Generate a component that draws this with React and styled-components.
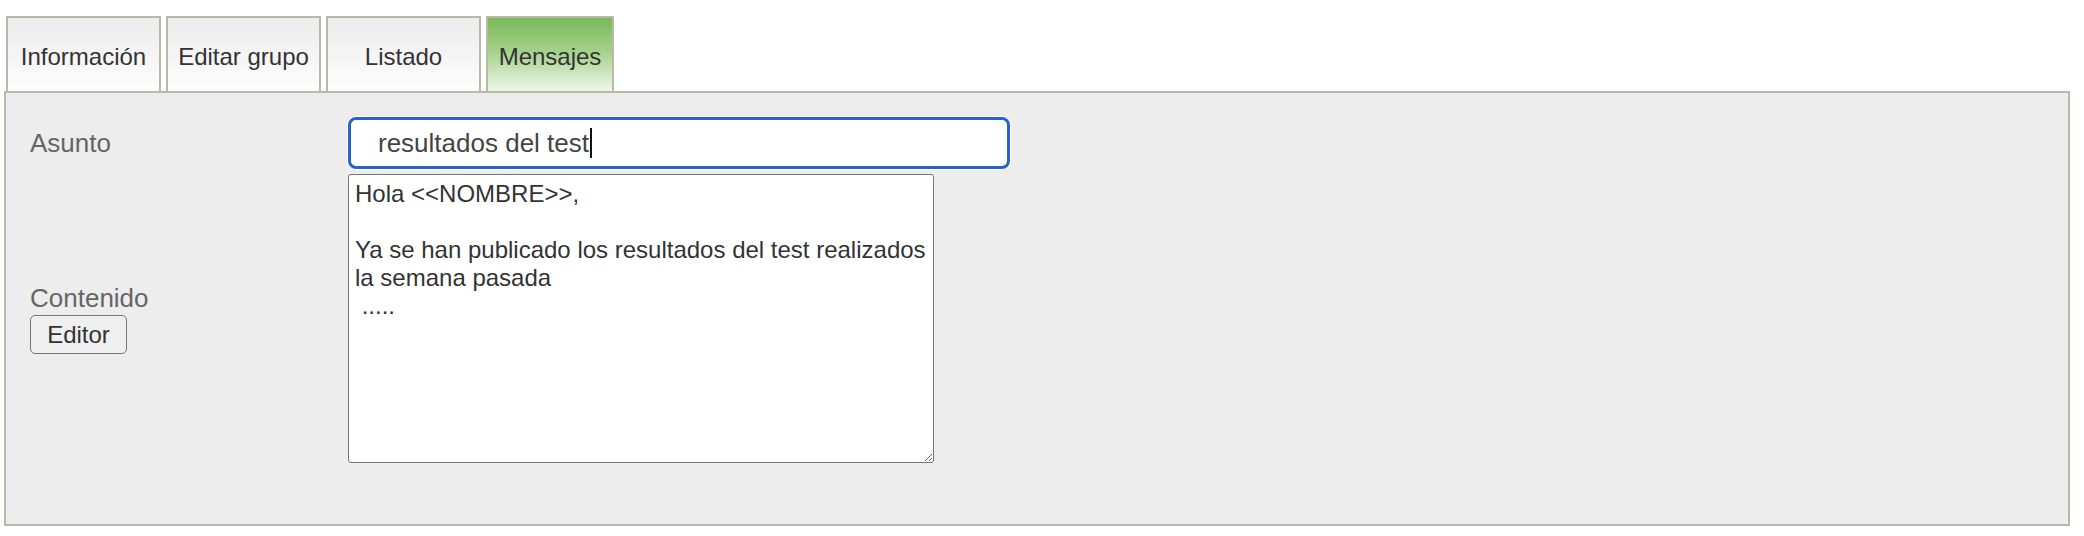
import React from "react";
import styled, { createGlobalStyle } from "styled-components";

const GlobalStyle = createGlobalStyle`
  body {
    margin: 0;
    background: #fff;
    font-family: "Liberation Sans", Arial, sans-serif;
  }
`;

const tabs = [
  { title: "Información", width: 155 },
  { title: "Editar grupo", width: 155 },
  { title: "Listado", width: 155 },
  { title: "Mensajes", width: 128, active: true },
];

const App = () => {
  return (
    <Page>
      <GlobalStyle />
      <TabBar>
        {tabs.map((tab) => (
          <Tab key={tab.title} width={tab.width} active={tab.active}>
            {tab.title}
          </Tab>
        ))}
      </TabBar>
      <Panel>
        <Form>
          <Label>Asunto</Label>
          <SubjectField role="textbox">
            resultados del test
            <Caret />
          </SubjectField>
          <LabelBlock>
            <Label>Contenido</Label>
            <EditorButton type="button">Editor</EditorButton>
          </LabelBlock>
          <Body
            defaultValue={"Hola <<NOMBRE>>,\n\nYa se han publicado los resultados del test realizados la semana pasada\n ....."}
          />
        </Form>
      </Panel>
    </Page>
  );
};

const Page = styled.div`
  padding: 16px 14px 10px 4px;
`;

const TabBar = styled.div`
  display: flex;
  gap: 5px;
  padding-left: 2px;
`;

const Tab = styled.div`
  box-sizing: border-box;
  width: ${({ width }) => width}px;
  height: 75px;
  padding: 4px 0 0;
  display: flex;
  align-items: center;
  justify-content: center;
  border: 2px solid #b9b8a9;
  border-bottom: none;
  font-size: 24px;
  color: #333;
  cursor: pointer;
  background: ${({ active }) =>
    active
      ? "linear-gradient(to bottom, #79b957 0%, #a3d18a 45%, #eef7e9 100%)"
      : "linear-gradient(to bottom, #ececec 0%, #fdfdfd 100%)"};
`;

const Panel = styled.div`
  box-sizing: border-box;
  height: 435px;
  border: 2px solid #b9b8a9;
  background: #ededed;
  padding: 24px 24px 0;
`;

const Form = styled.div`
  display: grid;
  grid-template-columns: 318px auto;
  row-gap: 5px;
  align-items: center;
  justify-items: start;
`;

const Label = styled.div`
  font-size: 26px;
  line-height: 30px;
  color: #666;
`;

const LabelBlock = styled.div`
  display: flex;
  flex-direction: column;
  align-items: flex-start;
  gap: 2px;
`;

const SubjectField = styled.div`
  box-sizing: border-box;
  width: 662px;
  height: 52px;
  padding: 0 27px;
  display: flex;
  align-items: center;
  background: #fff;
  border: 3px solid #2a63c8;
  border-radius: 8px;
  box-shadow: 0 0 0 1px #fff;
  font-size: 26px;
  color: #444;
  white-space: pre;
`;

const Caret = styled.span`
  display: inline-block;
  width: 2px;
  height: 30px;
  margin-left: 1px;
  background: #111;
`;

const EditorButton = styled.button`
  box-sizing: border-box;
  width: 97px;
  height: 39px;
  padding: 0;
  border: 1.5px solid #767676;
  border-radius: 5px;
  background: #efefef;
  font-family: inherit;
  font-size: 24px;
  color: #333;
`;

const Body = styled.textarea`
  box-sizing: border-box;
  display: block;
  width: 586px;
  height: 289px;
  margin: 0;
  padding: 5px 2px 5px 6px;
  border: 1.5px solid #767676;
  border-radius: 3px;
  background: #fff;
  font-family: inherit;
  font-size: 24px;
  line-height: 28px;
  color: #333;
  overflow: hidden;
`;

export default App;
